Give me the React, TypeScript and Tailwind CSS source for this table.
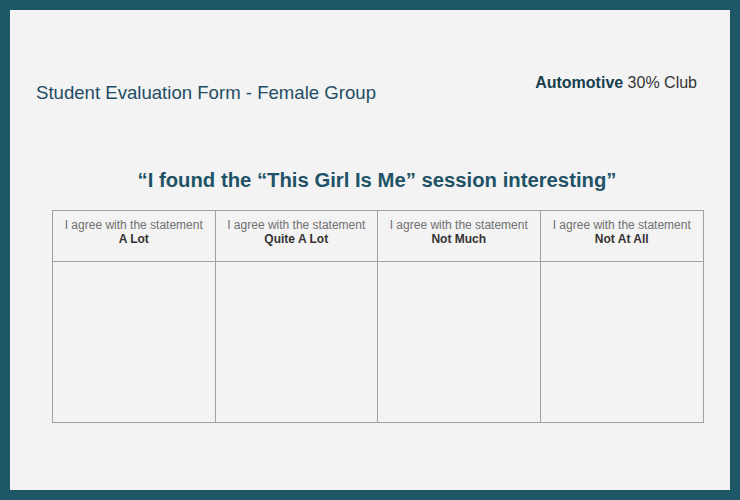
import React from 'react';

const options = ['A Lot', 'Quite A Lot', 'Not Much', 'Not At All'];

const App = () => {
  return <div className="w-[740px] h-[500px] bg-[#1e5866] p-[10px] font-['Liberation_Sans',Arial,sans-serif]">
      <div className="w-full h-full bg-[#f3f3f3] flex flex-col">
        <div className="flex justify-between items-start pl-[26px] pr-[33px] pt-[64px]">
          <h1 className="mt-[8px] text-[18.6px] leading-[22px] text-[#1f4d63]">
            Student Evaluation Form - Female Group
          </h1>
          <div className="text-[16px] leading-[18px] text-[#333]">
            <span className="font-bold text-[#173f4d]">Automotive</span> 30% Club
          </div>
        </div>
        <h2 className="mt-[64px] text-center text-[20.3px] leading-[24px] font-bold text-[#1e5266] pl-[14px]">
          “I found the “This Girl Is Me” session interesting”
        </h2>
        <div className="mt-[18px] ml-[42px] w-[652px] grid grid-cols-4 border border-[#a0a0a0]">
          {options.map((o, i) => <div key={o} className={`flex flex-col ${i < 3 ? 'border-r border-[#a0a0a0]' : ''}`}>
              <div className="h-[51px] border-b border-[#a0a0a0] text-center pt-[7px]">
                <div className="text-[12px] leading-[14px] text-[#707070]">I agree with the statement</div>
                <div className="text-[12px] leading-[15px] font-bold text-[#333]">{o}</div>
              </div>
              <div className="h-[160px]" />
            </div>)}
        </div>
      </div>
    </div>;
};

export default App;
